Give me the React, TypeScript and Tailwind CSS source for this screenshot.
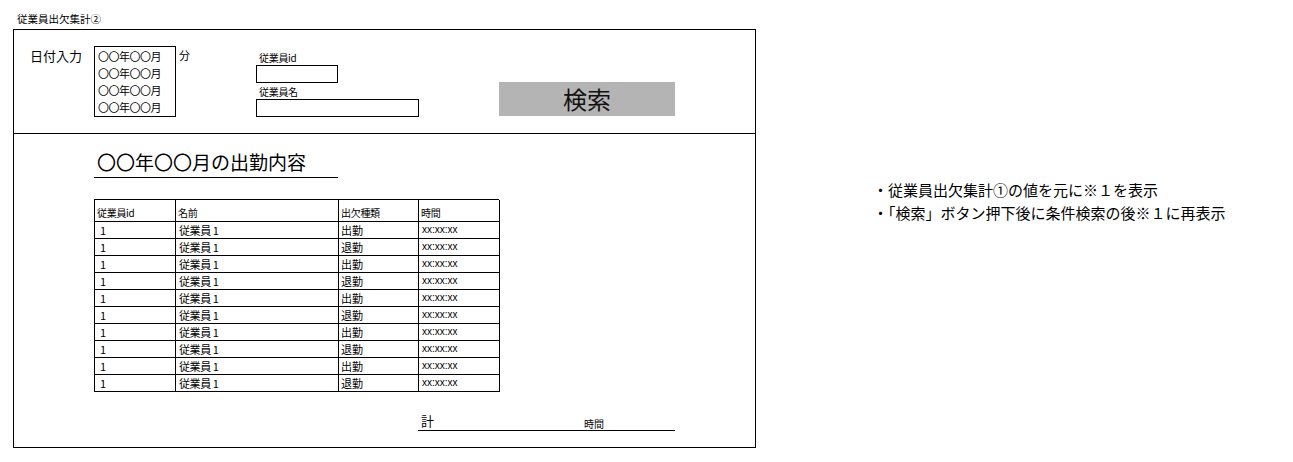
import React from "react";

const rows = Array.from({ length: 10 }, (_, i) => (i % 2 === 0 ? "出勤" : "退勤"));

export default function App() {
  return (
    <div
      className="w-[1293px] h-[462px] bg-white text-black flex items-start"
      style={{ fontFamily: '"Noto Sans CJK JP", "Noto Sans", sans-serif' }}
    >
      <div className="ml-[13px] flex flex-col">
        <div className="h-[29px] pl-[4px] pt-[12px] text-[10.5px] leading-[14px]">従業員出欠集計②</div>
        <div className="w-[743px] h-[419px] border border-black flex flex-col">
          {/* top section */}
          <div className="h-[104px] border-b border-black flex items-start pt-[16px]">
            <div className="ml-[16px] w-[64px] mt-[2px] text-[13px] leading-[16px]">日付入力</div>
            <div className="w-[82px] h-[71px] border border-black pl-[3px] pt-[1px] text-[11px] leading-[17px] tracking-[-0.5px]">
              <div>〇〇年〇〇月</div>
              <div>〇〇年〇〇月</div>
              <div>〇〇年〇〇月</div>
              <div>〇〇年〇〇月</div>
            </div>
            <div className="w-[80px] pl-[3px] text-[11px] leading-[17px] mt-[1px]">分</div>
            <div className="flex flex-col w-[163px]">
              <div className="h-[19px] pl-[3px] flex items-end text-[10px] leading-[14px] tracking-[-0.3px]">従業員id</div>
              <div className="w-[82px] h-[18px] border border-black" />
              <div className="h-[16px] pl-[3px] flex items-end text-[10px] leading-[14px] tracking-[-0.3px]">従業員名</div>
              <div className="w-[163px] h-[18px] border border-black" />
            </div>
            <div className="ml-[80px] mt-[36px] w-[176px] h-[34px] bg-[#b4b4b4] flex items-center justify-center text-[24px] leading-[28px] text-[#111]">
              検索
            </div>
          </div>
          {/* bottom section */}
          <div className="flex flex-col pl-[80px]">
            <div className="mt-[16px] w-[244px] h-[28px] border-b border-black pl-[3px] text-[19px] leading-[24px]">
              〇〇年〇〇月の出勤内容
            </div>
            <div className="mt-[21px] w-[405px] grid grid-cols-[81px_163px_80px_81px] border-l border-t border-black">
              {["従業員id", "名前", "出欠種類", "時間"].map((h) => (
                <div key={h} className="h-[22px] border-r border-b border-black pl-[2px] flex items-end text-[10px] leading-[14px] tracking-[-0.3px] pb-[1px]">
                  {h}
                </div>
              ))}
              {rows.map((kind, i) => (
                <React.Fragment key={i}>
                  <div className="h-[17px] border-r border-b border-black pl-[5px] flex items-center text-[11px] leading-[14px]">1</div>
                  <div className="h-[17px] border-r border-b border-black pl-[3px] flex items-center text-[11px] leading-[14px] tracking-[-0.4px]">従業員 1</div>
                  <div className="h-[17px] border-r border-b border-black pl-[2px] flex items-center text-[11px] leading-[14px]">{kind}</div>
                  <div
                    className="h-[17px] border-r border-b border-black pl-[3px] flex items-center text-[10px] leading-[12px]"
                    style={{ fontFamily: '"Liberation Sans", sans-serif' }}
                  >
                    xx:xx:xx
                  </div>
                </React.Fragment>
              ))}
            </div>
            <div className="ml-[324px] mt-[19px] w-[257px] h-[20px] border-b border-black flex items-end">
              <div className="w-[166px] pl-[3px] text-[13px] leading-[16px] mb-[1px]">計</div>
              <div className="text-[10px] leading-[13px]">時間</div>
            </div>
          </div>
        </div>
      </div>
      <div className="ml-[117px] mt-[178px] text-[15px] leading-[23px]">
        <div>・従業員出欠集計①の値を元に※１を表示</div>
        <div>・「検索」ボタン押下後に条件検索の後※１に再表示</div>
      </div>
    </div>
  );
}
